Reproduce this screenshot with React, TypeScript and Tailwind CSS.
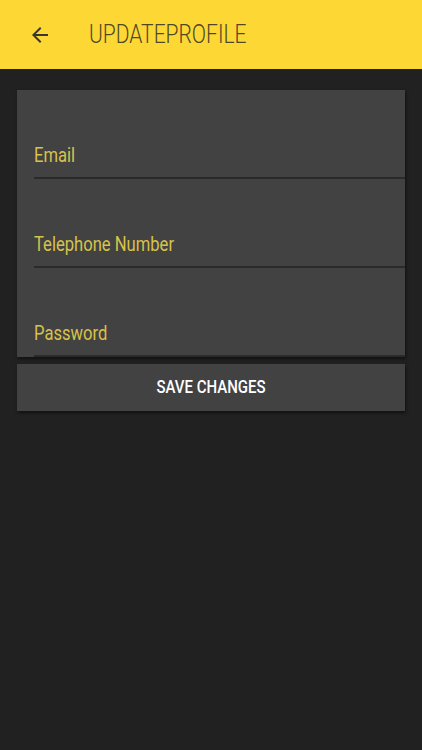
import React from "react";

function Field({ label }: { label: string }) {
  return (
    <div className="h-[89px] flex flex-col justify-end pl-[17px]">
      <div className="h-[20px] leading-[20px] mb-[9px]">
        <span className="inline-block origin-bottom scale-y-125 text-[16.6px] text-[#d8c24a]">{label}</span>
      </div>
      <div className="h-[2px] bg-[#2a2a2a]" />
    </div>
  );
}

export default function App() {
  return (
    <div className="w-[422px] h-[750px] bg-[#212121] font-['Roboto',sans-serif] overflow-hidden">
      <div className="h-[69px] bg-[#fdd835] flex items-center pl-[28px]">
        <svg width="24" height="24" viewBox="0 0 24 24" className="text-[#3a3630]">
          <path fill="currentColor" d="M20 11H7.83l5.59-5.59L12 4l-8 8 8 8 1.41-1.41L7.83 13H20v-2z" />
        </svg>
        <span className="ml-[37px] inline-block scale-y-125 text-[21px] font-light text-[#4f4826] tracking-[0px]">
          UPDATEPROFILE
        </span>
      </div>
      <div className="px-[17px] pt-[21px] flex flex-col gap-[7px]">
        <div className="bg-[#424242] h-[267px] shadow-[1px_2px_3px_rgba(0,0,0,0.5)] flex flex-col">
          <Field label="Email" />
          <Field label="Telephone Number" />
          <Field label="Password" />
        </div>
        <button className="h-[47px] bg-[#424242] shadow-[1px_2px_3px_rgba(0,0,0,0.5)] flex items-center justify-center">
          <span className="inline-block scale-y-125 text-[15px] font-medium text-white tracking-[0px]">SAVE CHANGES</span>
        </button>
      </div>
    </div>
  );
}
